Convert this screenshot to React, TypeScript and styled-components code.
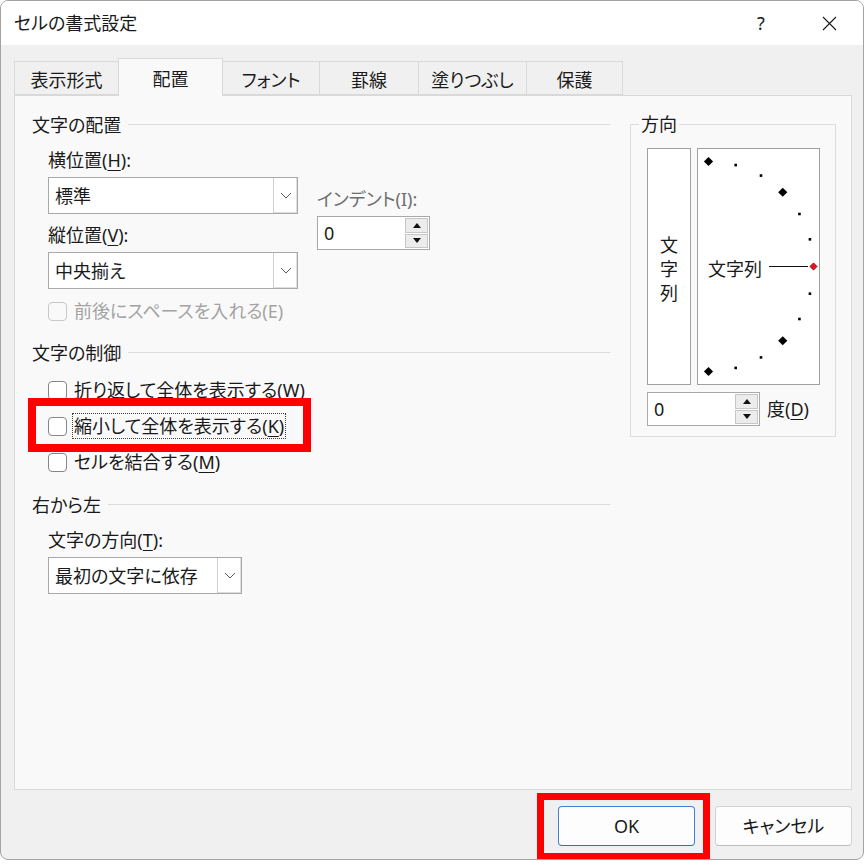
import React from "react";
import styled, { createGlobalStyle } from "styled-components";

const UI_FONT = `"Noto Sans", "Noto Sans CJK JP", sans-serif`;

const GlobalStyle = createGlobalStyle`
  html, body {
    margin: 0;
    padding: 0;
    background: #ffffff;
  }
  body {
    font-family: ${UI_FONT};
    font-size: 18px;
    line-height: 24px;
    color: #1a1a1a;
    font-feature-settings: "palt";
  }
  *, *::before, *::after {
    box-sizing: border-box;
  }
`;

const Window = styled.div`
  width: 864px;
  height: 860px;
  border: 1px solid #a3a3a3;
  border-radius: 8px;
  overflow: hidden;
  display: flex;
  flex-direction: column;
  background: #f0f0f0;
`;

const TitleBar = styled.div`
  height: 44px;
  flex: none;
  display: flex;
  align-items: center;
  padding-left: 13px;
  background: #ffffff;
`;

const Title = styled.div`
  flex: 1;
`;

const CaptionButton = styled.div`
  width: 68px;
  height: 44px;
  display: flex;
  align-items: center;
  justify-content: center;
  color: #1a1a1a;
`;

const Body = styled.div`
  flex: 1;
  display: flex;
  flex-direction: column;
  padding: 13px 11px 0 13px;
`;

const TabStrip = styled.div`
  height: 38px;
  flex: none;
  display: flex;
  align-items: flex-end;
  margin-bottom: -1px;
  position: relative;
  z-index: 1;
`;

const Tab = styled.div<{ $width: number; $active?: boolean }>`
  width: ${(p) => p.$width}px;
  height: ${(p) => (p.$active ? 38 : 34)}px;
  margin-left: -1px;
  margin-bottom: ${(p) => (p.$active ? 0 : 1)}px;
  padding-top: 3px;
  display: flex;
  align-items: center;
  justify-content: center;
  border: 1px solid #d9d9d9;
  border-bottom: ${(p) => (p.$active ? "none" : "1px solid #d9d9d9")};
  background: ${(p) => (p.$active ? "#f9f9f9" : "#f0f0f0")};
  position: relative;
  z-index: ${(p) => (p.$active ? 2 : 1)};

  &:first-child {
    margin-left: 0;
  }
`;

const Panel = styled.div`
  flex: 1;
  display: flex;
  gap: 20px;
  padding: 17px 15px 0 17px;
  border: 1px solid #d9d9d9;
  background: #f9f9f9;
`;

const Column = styled.div`
  width: 578px;
  flex: none;
`;

const Section = styled.section<{ $gap: number }>`
  margin-top: ${(p) => p.$gap}px;
`;

const SectionHeader = styled.div`
  display: flex;
  align-items: center;
  gap: 7px;
  line-height: 24px;

  &::after {
    content: "";
    flex: 1;
    height: 1px;
    margin-top: -2px;
    background: #dcdcdc;
  }
`;

const SectionBody = styled.div<{ $top: number }>`
  padding: ${(p) => p.$top}px 0 0 16px;
`;

const Row = styled.div`
  display: flex;
  align-items: flex-start;
`;

const Stack = styled.div<{ $width: number }>`
  width: ${(p) => p.$width}px;
  display: flex;
  flex-direction: column;
`;

const IndentColumn = styled.div`
  margin: 39px 0 0 19px;
  display: flex;
  flex-direction: column;
  gap: 5px;
`;

const Field = styled.div`
  display: flex;
  flex-direction: column;
  gap: 5px;

  & + & {
    margin-top: 9px;
  }
`;

const FieldLabel = styled.div<{ $muted?: boolean }>`
  line-height: 24px;
  color: ${(p) => (p.$muted ? "#6e6e6e" : "#1a1a1a")};
`;

const Key = styled.span`
  text-decoration: underline;
  text-underline-offset: 3px;
  text-decoration-thickness: 1px;
`;

const Combo = styled.div<{ $width: number }>`
  width: ${(p) => p.$width}px;
  height: 37px;
  display: flex;
  background: #ffffff;
  border: 1px solid #a9a9a9;
`;

const ComboValue = styled.span`
  flex: 1;
  display: flex;
  align-items: center;
  padding-left: 6px;
`;

const DropButton = styled.span`
  width: 24px;
  flex: none;
  display: flex;
  align-items: center;
  justify-content: center;
  border-left: 1px solid #cfcfcf;
  box-shadow: inset -1px -1px 0 #dedede;
`;

const Spin = styled.div<{ $width: number }>`
  width: ${(p) => p.$width}px;
  height: 34px;
  display: flex;
  background: #ffffff;
  border: 1px solid #a9a9a9;
`;

const SpinValue = styled.span`
  flex: 1;
  display: flex;
  align-items: center;
  padding-left: 6px;
`;

const SpinButtons = styled.span`
  width: 23px;
  margin: 1px;
  display: flex;
  flex-direction: column;
  gap: 1px;
`;

const SpinStep = styled.span`
  flex: 1;
  display: flex;
  align-items: center;
  justify-content: center;
  background: #ececec;
  border: 1px solid #c6c6c6;
`;

const Arrow = styled.span<{ $down?: boolean }>`
  width: 0;
  height: 0;
  border-left: 4.5px solid transparent;
  border-right: 4.5px solid transparent;
  ${(p) => (p.$down ? "border-top: 5px solid #111;" : "border-bottom: 5px solid #111;")}
`;

const CheckRow = styled.label<{ $disabled?: boolean }>`
  height: 36px;
  width: fit-content;
  display: flex;
  align-items: center;
  gap: 5px;
  color: ${(p) => (p.$disabled ? "#a3a3a3" : "#1a1a1a")};
`;

const Box = styled.span<{ $disabled?: boolean }>`
  width: 19px;
  height: 19px;
  flex: none;
  border: 1px solid ${(p) => (p.$disabled ? "#c8c8c8" : "#868686")};
  border-radius: 4px;
  background: ${(p) => (p.$disabled ? "#f9f9f9" : "#ffffff")};
`;

const CheckText = styled.span<{ $focused?: boolean }>`
  padding: 0 1px;
  line-height: 24px;
  border: 1px ${(p) => (p.$focused ? "dotted #3c3c3c" : "solid transparent")};
`;

const SpacedRow = styled.div`
  margin-top: 4px;
`;

const Annotated = styled.div<{ $inset: string; $weight: number }>`
  position: relative;
  width: fit-content;

  &::after {
    content: "";
    position: absolute;
    inset: ${(p) => p.$inset};
    border: ${(p) => p.$weight}px solid #ff0000;
    pointer-events: none;
  }
`;

const GroupBox = styled.fieldset`
  width: 206px;
  flex: none;
  align-self: flex-start;
  min-width: 0;
  margin: -1px 0 0;
  padding: 0 15px 10px 8px;
  border: 1px solid #dcdcdc;
`;

const GroupLegend = styled.legend`
  padding: 0 2px;
  line-height: 24px;
`;

const OrientBody = styled.div`
  margin: 12px 0 0 8px;
  display: flex;
  flex-direction: column;
  gap: 7px;
`;

const OrientBoxes = styled.div`
  height: 237px;
  display: flex;
  gap: 6px;
`;

const VerticalText = styled.div`
  width: 44px;
  display: flex;
  flex-direction: column;
  align-items: center;
  justify-content: center;
  padding-top: 4px;
  line-height: 24px;
  background: #ffffff;
  border: 1px solid #a0a0a0;
`;

const Dial = styled.div`
  flex: 1;
  position: relative;
  display: flex;
  align-items: center;
  padding: 5px 0 0 10px;
  background: #ffffff;
  border: 1px solid #a0a0a0;
`;

const DialDrawing = styled.svg`
  position: absolute;
  inset: 0;
`;

const DegreeRow = styled.div`
  display: flex;
  align-items: center;
  gap: 7px;
`;

const Footer = styled.div`
  height: 69px;
  flex: none;
  display: flex;
  justify-content: flex-end;
  align-items: flex-start;
  gap: 20px;
  padding-top: 16px;
`;

const Button = styled.button<{ $primary?: boolean }>`
  width: 137px;
  height: 40px;
  padding: 0;
  font: inherit;
  color: #1a1a1a;
  background: #fdfdfd;
  border: 1px solid ${(p) => (p.$primary ? "#3f80d3" : "#d3d3d3")};
  border-bottom-color: ${(p) => (p.$primary ? "#2d6fc4" : "#bdbdbd")};
  border-radius: 4px;
`;

const tabs = [
  { label: "表示形式", width: 105 },
  { label: "配置", width: 105, active: true },
  { label: "フォント", width: 98 },
  { label: "罫線", width: 100 },
  { label: "塗りつぶし", width: 109 },
  { label: "保護", width: 97 },
];

const Chevron = () => (
  <svg width="12" height="7" viewBox="0 0 12 7">
    <path d="M1 1 L6 6 L11 1" fill="none" stroke="#5a5a5a" strokeWidth="1" />
  </svg>
);

const SpinButtonPair = () => (
  <SpinButtons>
    <SpinStep>
      <Arrow />
    </SpinStep>
    <SpinStep>
      <Arrow $down />
    </SpinStep>
  </SpinButtons>
);

const DIAL_CX = 10.5;
const DIAL_CY = 117.5;
const DIAL_R = 105;

const DialMarks = () => {
  const angles = Array.from({ length: 13 }, (_, i) => 90 - i * 15);
  return (
    <DialDrawing width="121" height="235" viewBox="0 0 121 235">
      <line x1="71" y1={DIAL_CY} x2="110" y2={DIAL_CY} stroke="#111" strokeWidth="1" />
      {angles.map((a) => {
        const rad = (a * Math.PI) / 180;
        const x = DIAL_CX + DIAL_R * Math.cos(rad);
        const y = DIAL_CY - DIAL_R * Math.sin(rad);
        if (a === 0) {
          const h = 3.6;
          return (
            <polygon
              key={a}
              points={`${x},${y - h} ${x + h},${y} ${x},${y + h} ${x - h},${y}`}
              fill="#e81123"
              stroke="#7a0000"
              strokeWidth="0.8"
            />
          );
        }
        if (a % 45 === 0) {
          const h = 4.6;
          return (
            <polygon
              key={a}
              points={`${x},${y - h} ${x + h},${y} ${x},${y + h} ${x - h},${y}`}
              fill="#000"
            />
          );
        }
        return <rect key={a} x={x - 1.3} y={y - 1.3} width="2.6" height="2.6" fill="#000" />;
      })}
    </DialDrawing>
  );
};

export default function App() {
  return (
    <>
      <GlobalStyle />
      <Window>
        <TitleBar>
          <Title>セルの書式設定</Title>
          <CaptionButton>?</CaptionButton>
          <CaptionButton>
            <svg width="15" height="15" viewBox="0 0 15 15">
              <path d="M1 1 L14 14 M14 1 L1 14" stroke="#1a1a1a" strokeWidth="1.1" />
            </svg>
          </CaptionButton>
        </TitleBar>

        <Body>
          <TabStrip>
            {tabs.map((t) => (
              <Tab key={t.label} $width={t.width} $active={t.active}>
                {t.label}
              </Tab>
            ))}
          </TabStrip>

          <Panel>
            <Column>
              <Section $gap={0}>
                <SectionHeader>文字の配置</SectionHeader>
                <SectionBody $top={11}>
                  <Row>
                    <Stack $width={250}>
                      <Field>
                        <FieldLabel>
                          横位置(<Key>H</Key>):
                        </FieldLabel>
                        <Combo $width={250}>
                          <ComboValue>標準</ComboValue>
                          <DropButton>
                            <Chevron />
                          </DropButton>
                        </Combo>
                      </Field>
                      <Field>
                        <FieldLabel>
                          縦位置(<Key>V</Key>):
                        </FieldLabel>
                        <Combo $width={250}>
                          <ComboValue>中央揃え</ComboValue>
                          <DropButton>
                            <Chevron />
                          </DropButton>
                        </Combo>
                      </Field>
                      <SpacedRow>
                        <CheckRow $disabled>
                          <Box $disabled />
                          <CheckText>前後にスペースを入れる(E)</CheckText>
                        </CheckRow>
                      </SpacedRow>
                    </Stack>
                    <IndentColumn>
                      <FieldLabel $muted>インデント(I):</FieldLabel>
                      <Spin $width={113}>
                        <SpinValue>0</SpinValue>
                        <SpinButtonPair />
                      </Spin>
                    </IndentColumn>
                  </Row>
                </SectionBody>
              </Section>

              <Section $gap={12}>
                <SectionHeader>文字の制御</SectionHeader>
                <SectionBody $top={7}>
                  <CheckRow>
                    <Box />
                    <CheckText>折り返して全体を表示する(W)</CheckText>
                  </CheckRow>
                  <Annotated $inset="-10px -25px -8px -20px" $weight={8}>
                    <CheckRow>
                      <Box />
                      <CheckText $focused>
                        縮小して全体を表示する(<Key>K</Key>)
                      </CheckText>
                    </CheckRow>
                  </Annotated>
                  <CheckRow>
                    <Box />
                    <CheckText>
                      セルを結合する(<Key>M</Key>)
                    </CheckText>
                  </CheckRow>
                </SectionBody>
              </Section>

              <Section $gap={13}>
                <SectionHeader>右から左</SectionHeader>
                <SectionBody $top={11}>
                  <Field>
                    <FieldLabel>
                      文字の方向(<Key>T</Key>):
                    </FieldLabel>
                    <Combo $width={194}>
                      <ComboValue>最初の文字に依存</ComboValue>
                      <DropButton>
                        <Chevron />
                      </DropButton>
                    </Combo>
                  </Field>
                </SectionBody>
              </Section>
            </Column>

            <GroupBox>
              <GroupLegend>方向</GroupLegend>
              <OrientBody>
                <OrientBoxes>
                  <VerticalText>
                    <span>文</span>
                    <span>字</span>
                    <span>列</span>
                  </VerticalText>
                  <Dial>
                    <DialMarks />
                    <span>文字列</span>
                  </Dial>
                </OrientBoxes>
                <DegreeRow>
                  <Spin $width={113}>
                    <SpinValue>0</SpinValue>
                    <SpinButtonPair />
                  </Spin>
                  <span>
                    度(<Key>D</Key>)
                  </span>
                </DegreeRow>
              </OrientBody>
            </GroupBox>
          </Panel>

          <Footer>
            <Annotated $inset="-13px -15px -14px -21px" $weight={7}>
              <Button $primary>OK</Button>
            </Annotated>
            <Button>キャンセル</Button>
          </Footer>
        </Body>
      </Window>
    </>
  );
}
